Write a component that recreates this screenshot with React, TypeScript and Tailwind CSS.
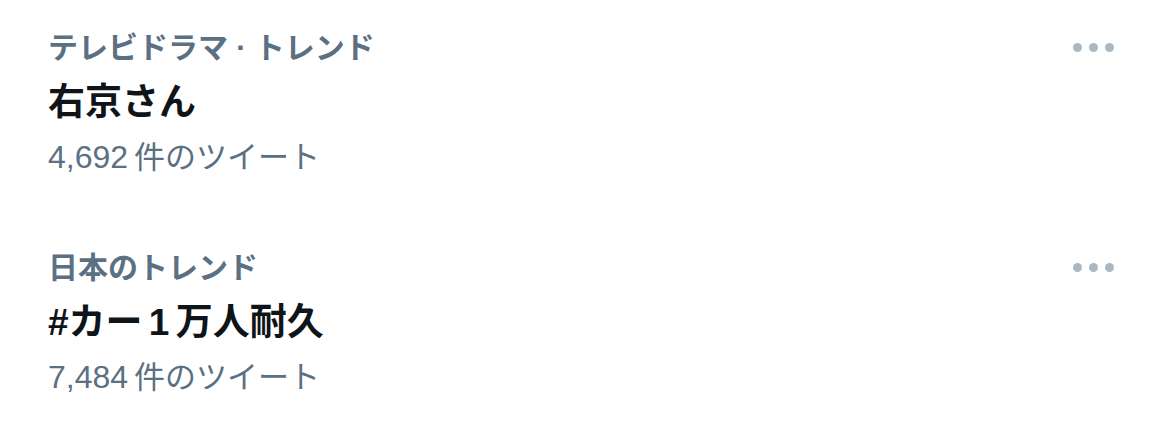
const trends = [
  { category: "テレビドラマ · トレンド", title: "右京さん", count: "4,692" },
  { category: "日本のトレンド", title: "#カー 1 万人耐久", count: "7,484" },
];

function MoreDots() {
  return (
    <div className="flex h-[55px] items-center gap-[7px]">
      <span className="h-[9px] w-[9px] rounded-full bg-[#aab8c2]" />
      <span className="h-[9px] w-[9px] rounded-full bg-[#aab8c2]" />
      <span className="h-[9px] w-[9px] rounded-full bg-[#aab8c2]" />
    </div>
  );
}

export default function App() {
  return (
    <div className="h-[442px] w-[1170px] bg-white pt-[20px] font-['Liberation_Sans','Noto_Sans_CJK_JP',sans-serif]">
      <div className="flex flex-col gap-[55px]">
        {trends.map((t) => (
          <div key={t.title} className="flex items-start justify-between pl-[48px] pr-[56px]">
            <div className="flex flex-col">
              <p className="text-[30px] leading-[55px] font-bold text-[#5b7083]">{t.category}</p>
              <p className="text-[37px] leading-[55px] font-bold text-[#0f1419] [word-spacing:-4px]">{t.title}</p>
              <p className="text-[31px] leading-[55px] text-[#5b7083]">
                <span className="mr-[6px] text-[32px]">{t.count}</span>件のツイート
              </p>
            </div>
            <MoreDots />
          </div>
        ))}
      </div>
    </div>
  );
}
